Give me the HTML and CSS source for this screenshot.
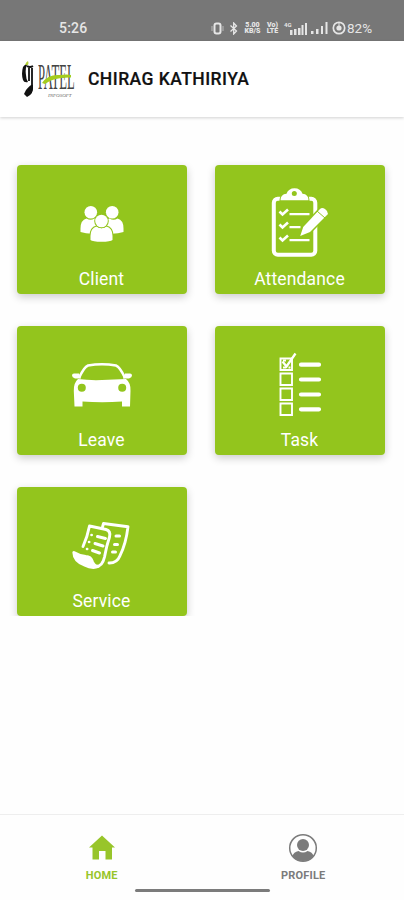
FILE: index.html
```html
<!DOCTYPE html>
<html lang="en">
<head>
  <meta charset="UTF-8">
  <meta name="viewport" content="width=device-width, initial-scale=1.0">
  <title>Dashboard</title>
  <link rel="stylesheet" href="styles.css">
</head>
<body>
  <div class="status-bar">
    <span class="time">5:26</span>
    <div class="status-icons">
      <svg width="14" height="13" viewBox="0 0 14 13" fill="none" stroke="currentColor">
        <rect x="3.5" y="1.5" width="6" height="10" rx="2" stroke-width="2"/>
        <path d="M1 4v5M12 4v5" stroke-opacity="0.6"/>
      </svg>
      <svg class="bluetooth" width="10" height="13" viewBox="0 0 10 13" fill="none" stroke="currentColor" stroke-width="1.3">
        <path d="M1.5 3.5l6 5.5L4.7 12V1l2.8 3-6 5.5"/>
      </svg>
      <div class="stack speed"><span>5.00</span><span>KB/S</span></div>
      <div class="stack volte"><span>Vo)</span><span>LTE</span></div>
      <div class="network">4G</div>
      <svg class="signal" width="17" height="13" viewBox="0 0 17 13" fill="currentColor">
        <path d="M0 8h2.5v5H0zM4 7h2.5v6H4zM8 6h2.5v7H8zM11.5 3h2v10h-2zM15 1h2v12h-2z"/>
      </svg>
      <svg class="signal-two" width="17" height="12" viewBox="0 0 17 12" fill="currentColor">
        <path d="M0 9h2.5v3H0zM5 7h2.5v5H5zM10 4h2v8h-2zM14.5 0h2v12h-2z"/>
      </svg>
      <svg class="battery" width="14" height="14" viewBox="0 0 14 14" fill="none" stroke="currentColor">
        <circle cx="7" cy="7" r="5.7" stroke-width="1.7"/>
        <circle cx="7" cy="7" r="2.6" fill="currentColor" stroke="none"/>
        <path d="M7 2v4"/>
      </svg>
      <span class="percent">82%</span>
    </div>
  </div>

  <div class="header">
    <div class="logo">
      <svg width="12" height="39" viewBox="0 0 12 39">
        <path d="M3 5Q4 2 6 1q1 2 0 4z" fill="#b5d334"/>
        <path d="M1 7q2-3 4-2-2 4-1 10 0 4 2 7-4 1-5-2-2-6 0-13z" fill="#111"/>
        <path d="M5 6q3 2 6 0M7 8v13M10 8v20q0 5-5 7" fill="none" stroke="#111" stroke-width="1.8"/>
        <path d="M4 30q5-6 7-5 1 9-6 12l-3-3z" fill="#111"/>
      </svg>
      <div class="wordmark">
        <span class="logo-name">PATEL</span>
        <span class="logo-sub">INFOSOFT</span>
        <svg class="swoosh" width="31" height="11" viewBox="0 0 31 11"><path d="M0 10Q6 1 18 2q7-1 11 0v2.500Q11 4 3 11z" fill="#a4cd1e"/></svg>
      </div>
    </div>
    <h1>CHIRAG KATHIRIYA</h1>
  </div>

  <div class="menu">
    <div class="card">
      <svg class="card-icon" viewBox="0 0 72 72" fill="currentColor">
        <circle cx="24.8" cy="25.2" r="6.3"/>
        <circle cx="46.2" cy="25.2" r="6.3"/>
        <path d="M14.500 45V41.500q0-8.500 6-10 4 2.500 8 0 6 1 6 10V46q-11 2-20-1z"/>
        <path d="M57.500 45V41.500q0-8.500-6-10-4 2.500-8 0-6 1-6 10V46q11 2 20-1z"/>
        <g class="front-person" stroke-width="2">
          <path d="M24.500 53v-4q0-8 6-9.500 5 3.500 10 0 6 1.500 6 9.500v4q-2 1.800-11 1.800T24.500 53z"/>
          <circle cx="35.500" cy="34" r="6.300"/>
        </g>
      </svg>
      <div class="card-label">Client</div>
    </div>
    <div class="card">
      <svg class="card-icon" viewBox="0 0 72 72" fill="none" stroke="currentColor">
        <rect x="9.800" y="11.700" width="41.500" height="56" rx="4" stroke-width="4"/>
        <path d="M16.500 13.300q0-6 6-6.500 2-5.500 8-5.500t8 5.500q6 .5 6 6.500z" fill="currentColor" stroke="#93c51d" stroke-width="2" paint-order="stroke"/>
        <circle cx="30.300" cy="6.500" r="2.500" fill="#93c51d" stroke="none"/>
        <path d="M15.500 24.500l3 3 5.500-5M15.500 37.500l3 3 5.500-5M15.500 50.500l3 3 5.500-5" stroke-width="2.600"/>
        <path d="M25.500 27.200h20M25.500 40.200h11M25.500 53.200h20" stroke-width="2.300"/>
        <path d="M36.200 49l3-9L56 22q2-2 5 0t3 5L46 45z" fill="currentColor" stroke="#93c51d" stroke-width="3" paint-order="stroke"/>
        <path d="M53 24l8 7" stroke="#93c51d" stroke-width="1"/>
      </svg>
      <div class="card-label">Attendance</div>
    </div>
    <div class="card">
      <svg class="card-icon" viewBox="0 0 72 72">
        <path d="M13 30Q18 19 22 17.500q14-2.500 28 0Q54 19 59 30" fill="none" stroke="currentColor" stroke-width="2.500"/>
        <path d="M8 25.500h5l2 5H9q-3-1-3-3t2-2zM64 25.500h-5l-2 5h6q3-1 3-3t-2-2zM12 31q12 1.500 24 1t24-1q5 4 4.500 12L64 58.500h-8V53.500q-20 1.500-39.500 0v5H8.500L7.800 43Q7.500 35 12 31z" fill="currentColor"/>
        <circle cx="15.800" cy="39.700" r="4" fill="#93c51d"/>
        <circle cx="56.200" cy="39.700" r="4" fill="#93c51d"/>
      </svg>
      <div class="card-label">Leave</div>
    </div>
    <div class="card">
      <svg class="card-icon" viewBox="0 0 72 72" fill="none" stroke="currentColor" stroke-width="1.900">
        <path d="M16.500 10.500h11.500v11.500h-11.500zM16.500 25.500h11.500v11.500h-11.500zM16.500 40.500h11.500v11.500h-11.500zM16.500 55.500h11.500v11.500h-11.500z"/>
        <path d="M18.500 13.500l4 5L31.500 5.500" stroke-width="2.300"/>
        <path d="M19 19.500h3M24.500 19.500h2M19 12.500h3"/>
        <path d="M37 16.700h18M37 31.500h18M37 46.500h18M37 61.300h18" stroke-width="4.200" stroke-linecap="round"/>
      </svg>
      <div class="card-label">Task</div>
    </div>
    <div class="card">
      <svg class="card-icon" viewBox="0 0 72 72" fill="none" stroke="currentColor" stroke-width="2.900" stroke-linejoin="round" stroke-linecap="round">
        <path d="M36.500 18l1-3.500 24.500 3.200q-2 17-8 29-3 7.500-11 7.300"/>
        <path d="M17 37.500q4.500-10 6.500-20.500l16.500 3.500q5 1.500 3.500 7.500-3 9-5 20-2 9-8 9.500"/>
        <path d="M7.800 43.500q6 3.500 12 4 5 0 6.500 5 2 5 6 5-6 2.500-14-1.500Q8 52 7.800 43.500z" fill="currentColor"/>
        <path d="M31.500 27.500l8 2M29 34.500l8 2.500M26.500 41.500l7 2.500M50 27h3.500M48.500 35.500h3M46.500 43h3" stroke-width="3"/>
        <path d="M25.500 26h.2M23 33h.2M21 40h.2" stroke-width="2.600"/>
      </svg>
      <div class="card-label">Service</div>
    </div>
  </div>

  <div class="bottom-nav">
    <div class="nav-item active">
      <svg width="30" height="30" viewBox="0 0 30 30" fill="currentColor">
        <path d="M15 2.500L28 14.500h-3V26.500h-6.500V18h-6.500v8.500H5.500V14.500H2z"/>
      </svg>
      <span>HOME</span>
    </div>
    <div class="nav-item">
      <svg width="30" height="30" viewBox="0 0 30 30" fill="currentColor">
        <circle cx="15" cy="15" r="13.300" fill="none" stroke="currentColor" stroke-width="1.500"/>
        <circle cx="15" cy="12" r="6"/>
        <path d="M4.500 23q1-4 6-5 4.500 3 9 0 5 1 6 5-4 5-10.500 5T4.500 23z"/>
      </svg>
      <span>PROFILE</span>
    </div>
    <div class="home-indicator"></div>
  </div>
</body>
</html>
```

FILE: styles.css
```css
* {
  box-sizing: border-box;
}

body {
  display: flex;
  flex-direction: column;
  height: 900px;
  margin: 0;
  font-family: Roboto, sans-serif;
  background: #fefefe;
  overflow: hidden;
}

.status-bar {
  display: flex;
  justify-content: space-between;
  height: 41px;
  padding: 20px 31px 0 59px;
  background: #777;
  color: #e6e6e6;
}

.time {
  font-size: 14px;
  line-height: 16px;
  font-weight: 500;
  letter-spacing: 0.2px;
}

.status-icons {
  display: flex;
  align-items: center;
  height: 16px;
}

.bluetooth {
  margin-left: 4px;
}

.stack {
  display: flex;
  flex-direction: column;
  font-size: 7px;
  line-height: 6.5px;
  font-weight: 900;
  text-align: center;
}

.speed {
  width: 19px;
  margin-left: 4px;
}

.volte {
  width: 15px;
  margin-left: 3px;
}

.network {
  width: 8px;
  height: 15px;
  margin-left: 4px;
  font-size: 6px;
  line-height: 7px;
  font-weight: 700;
}

.signal {
  margin-left: -2px;
}

.signal-two {
  margin-left: 4px;
}

.battery {
  margin-left: 4px;
}

.percent {
  width: 26px;
  margin-left: 1px;
  font-size: 13.5px;
  line-height: 16px;
}

.header {
  display: flex;
  align-items: center;
  height: 76px;
  padding-left: 22px;
  background: #fff;
  box-shadow: 0 1px 3px rgba(0, 0, 0, 0.18);
}

.header h1 {
  margin: 0 0 0 13px;
  font-size: 17.5px;
  line-height: 22px;
  font-weight: 500;
  letter-spacing: 0.45px;
  color: #111;
  -webkit-text-stroke: 0.2px #111;
}

.logo {
  display: flex;
  gap: 4px;
  width: 53px;
  height: 39px;
}

.wordmark {
  position: relative;
  width: 37px;
}

.logo-name {
  display: block;
  height: 18px;
  font-family: "Liberation Serif", serif;
  font-size: 20px;
  line-height: 18px;
  color: #444;
  transform: scale(0.63, 1.8);
  transform-origin: 0 0;
}

.logo-sub {
  display: block;
  margin: 14px 0 0 10px;
  font-family: "Liberation Serif", serif;
  font-size: 5px;
  line-height: 7px;
  font-style: italic;
  color: #666;
}

.swoosh {
  position: absolute;
  left: 4px;
  top: 13px;
}

.menu {
  display: grid;
  grid-template-columns: 170px 170px;
  grid-auto-rows: 128.5px;
  gap: 32.5px 28px;
  height: 498.5px;
  padding: 48.4px 16.5px 0;
  overflow: hidden;
}

.card {
  display: flex;
  flex-direction: column;
  align-items: center;
  padding-top: 21.5px;
  border-radius: 4px;
  background: #93c51d;
  color: #fff;
  box-shadow: 0 3px 8px rgba(0, 0, 0, 0.2);
}

.card-icon {
  width: 72px;
  height: 72px;
}

.front-person {
  stroke: #93c51d;
  paint-order: stroke;
}

.card-label {
  margin-top: 9px;
  font-size: 17.5px;
  line-height: 22px;
  letter-spacing: 0.15px;
}

.bottom-nav {
  position: relative;
  display: grid;
  grid-template-columns: 1fr 1fr;
  height: 86px;
  margin-top: auto;
  padding: 18px 0 0 1px;
  border-top: 1px solid #eee;
}

.nav-item {
  display: flex;
  flex-direction: column;
  align-items: center;
  color: #7b7b7b;
}

.nav-item span {
  margin-top: 6px;
  font-size: 11px;
  line-height: 13px;
  font-weight: 700;
  letter-spacing: 0.2px;
}

.nav-item.active {
  color: #98c52a;
}

.home-indicator {
  position: absolute;
  left: 135px;
  bottom: 8px;
  width: 135px;
  height: 3px;
  border-radius: 2px;
  background: #7b7b7b;
}
```
